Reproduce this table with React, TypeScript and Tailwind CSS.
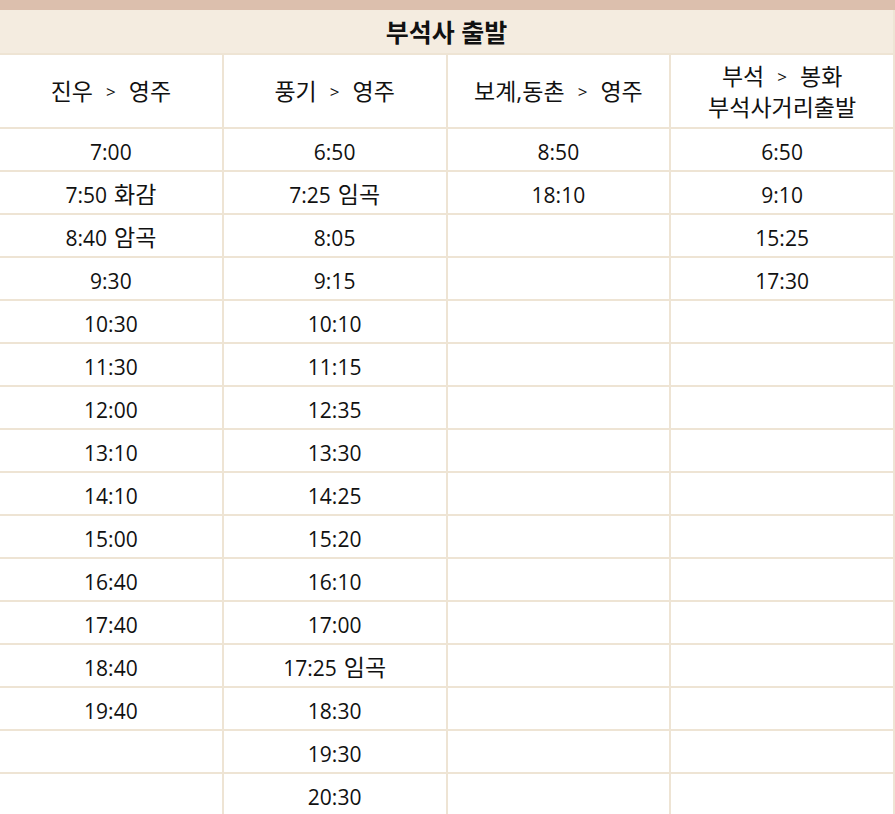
const cols: string[][] = [
  ["7:00", "7:50 화감", "8:40 암곡", "9:30", "10:30", "11:30", "12:00", "13:10", "14:10", "15:00", "16:40", "17:40", "18:40", "19:40"],
  ["6:50", "7:25 임곡", "8:05", "9:15", "10:10", "11:15", "12:35", "13:30", "14:25", "15:20", "16:10", "17:00", "17:25 임곡", "18:30", "19:30", "20:30"],
  ["8:50", "18:10"],
  ["6:50", "9:10", "15:25", "17:30"],
];

const ROWS = 17;

// Korean glyphs render a touch bigger than the digits in the original
function Ko({ children }: { children: string }) {
  return <span className="ml-[7px] text-[23px]">{children}</span>;
}

function Cell({ text }: { text?: string }) {
  if (!text) return null;
  const [time, place] = text.split(" ");
  return (
    <>
      {time}
      {place && <Ko>{place}</Ko>}
    </>
  );
}

function Arrow() {
  return <span className="mx-[13px] text-[17px] align-[2px]">&gt;</span>;
}

export default function App() {
  return (
    <div
      className="w-[895px] h-[814px] overflow-hidden bg-white text-[#111]"
      style={{ fontFamily: '"Open Sans", "Noto Sans CJK KR", sans-serif' }}
    >
      <div className="h-[10px] bg-[#dcbfad]" />
      <table className="w-[897px] -ml-[2px] table-fixed border-collapse">
        <thead>
          <tr>
            <th colSpan={4} className="h-[44px] bg-[#f4ece0] text-[25px] leading-[30px] font-bold border-2 border-[#eee4d4] border-t-0">
              부석사 출발
            </th>
          </tr>
          <tr className="text-[23px]">
            <th className="h-[74px] font-normal border-2 border-[#eee4d4]">
              진우<Arrow />영주
            </th>
            <th className="font-normal border-2 border-[#eee4d4]">
              풍기<Arrow />영주
            </th>
            <th className="font-normal border-2 border-[#eee4d4]">
              보계,동촌<Arrow />영주
            </th>
            <th className="font-normal border-2 border-[#eee4d4] leading-[30px]">
              부석<Arrow />봉화
              <br />
              부석사거리출발
            </th>
          </tr>
        </thead>
        <tbody className="text-[21px] leading-[26px]">
          {Array.from({ length: ROWS }).map((_, r) => (
            <tr key={r}>
              {cols.map((c, i) => (
                <td key={i} className="h-[43px] p-0 pt-[4px] text-center border-2 border-[#eee4d4]">
                  <Cell text={c[r]} />
                </td>
              ))}
            </tr>
          ))}
        </tbody>
      </table>
    </div>
  );
}
